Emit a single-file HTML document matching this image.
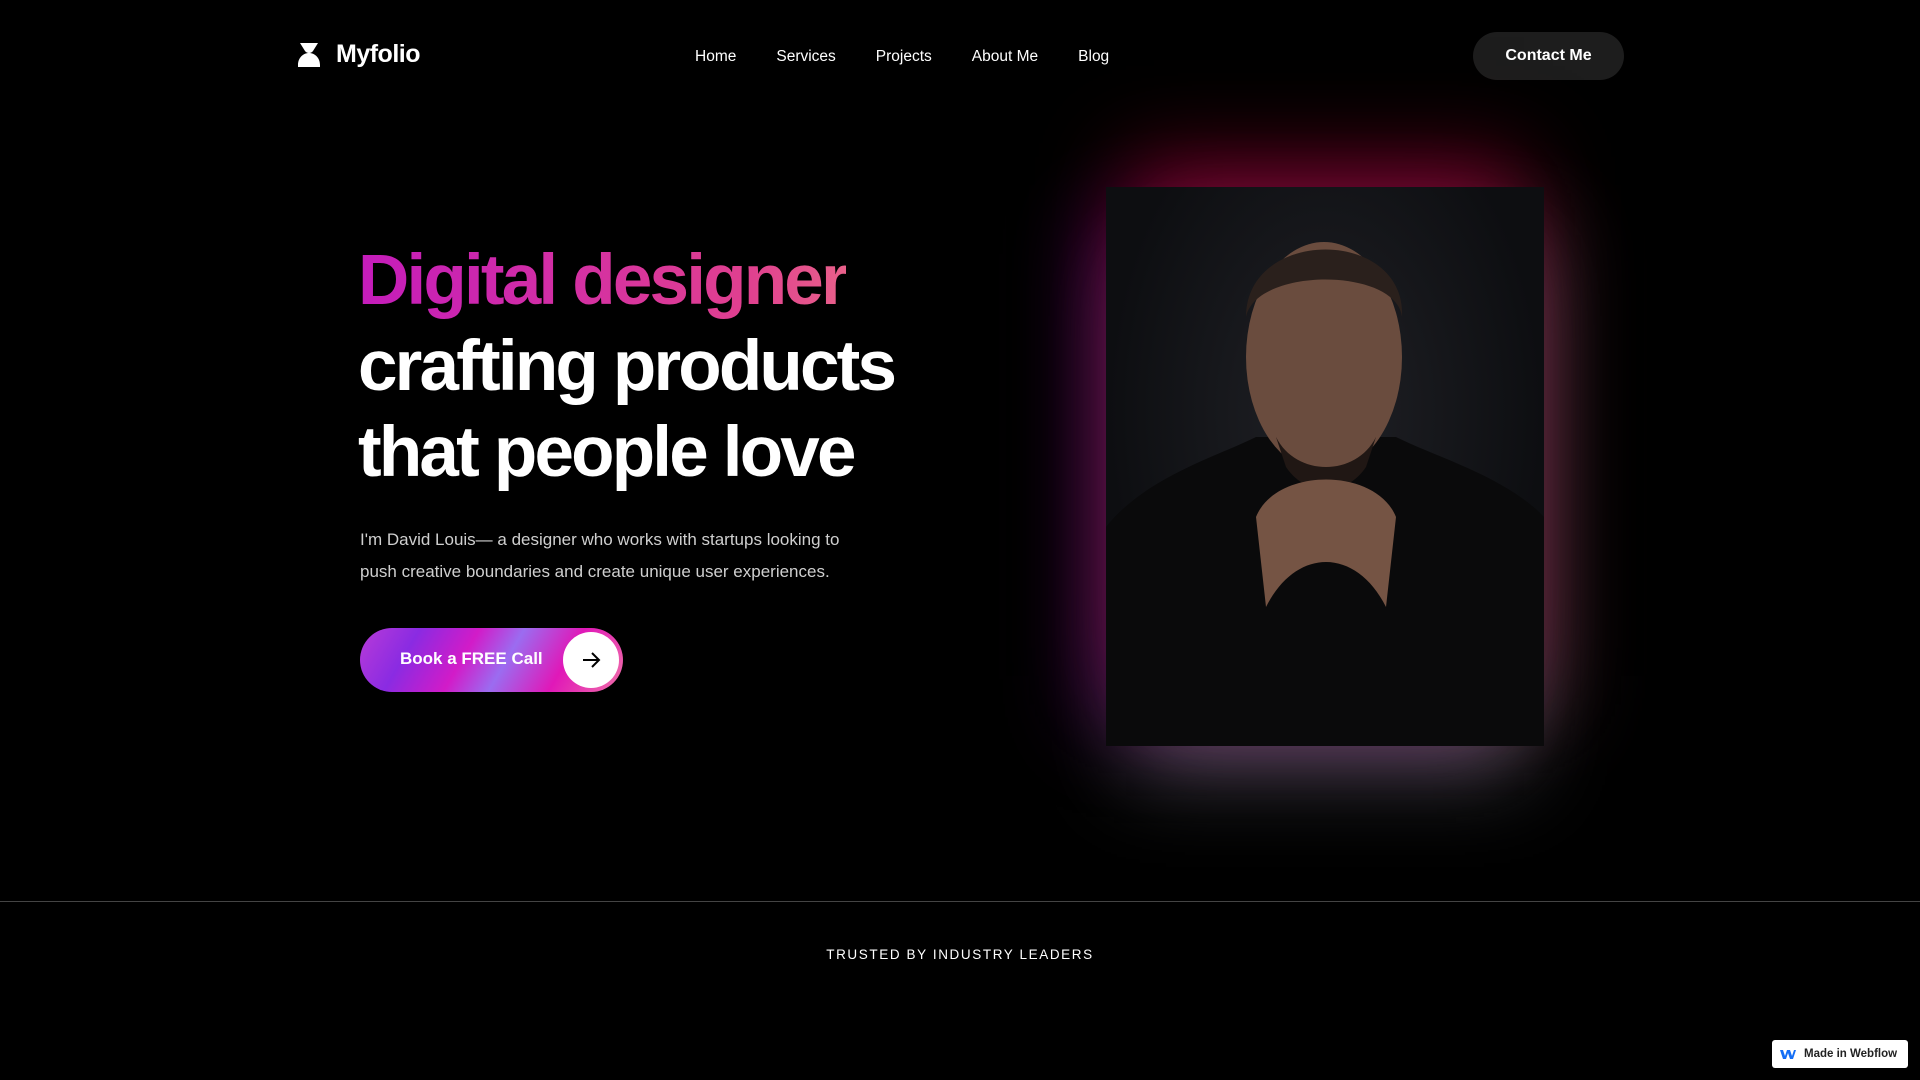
<!DOCTYPE html>
<html><head><meta charset="utf-8"><style>
*{margin:0;padding:0;box-sizing:border-box}
body{width:1920px;height:1080px;background:#000;color:#fff;font-family:"Liberation Sans",sans-serif;overflow:hidden;position:relative}
.logo{position:absolute;left:296px;top:40px;display:flex;align-items:center;gap:14px;font-weight:700;font-size:25px;letter-spacing:-0.5px}
nav{position:absolute;top:48px;left:695px;display:flex;gap:40px;font-size:15.5px}
.contact{position:absolute;left:1473px;top:32px;width:151px;height:48px;border-radius:24px;background:#1d1d1d;font-weight:700;font-size:16px;display:flex;align-items:center;justify-content:center}
h1{position:absolute;left:358px;top:238px;font-size:71px;line-height:86px;font-weight:700;letter-spacing:-2.8px}
h1 .g{background:linear-gradient(90deg,#c41cbb,#e0408f 80%,#e8608a);-webkit-background-clip:text;color:transparent}
p{position:absolute;left:360px;top:524px;font-size:17px;line-height:32px;color:#cfcfcf;width:520px}
.btn{position:absolute;left:360px;top:628px;width:263px;height:64px;border-radius:32px;background:linear-gradient(120deg,#b83bd8 0%,#8a2be2 20%,#d21bc8 40%,#9b6cf0 55%,#e018b8 75%,#f070a8 100%)}
.btn span{position:absolute;left:40px;top:21px;font-size:17px;font-weight:600;color:#fff}
.btn .c{position:absolute;right:4px;top:4px;width:56px;height:56px;border-radius:50%;background:#fff;display:flex;align-items:center;justify-content:center}
.glow{position:absolute;left:1106px;top:187px;width:438px;height:559px;box-shadow:0 -50px 80px -20px rgba(190,0,50,.5),-40px 0 80px -20px rgba(150,0,180,.35),0 50px 80px -20px rgba(220,220,240,.3),40px 0 80px -20px rgba(200,120,150,.25)}
.photo{position:absolute;left:1106px;top:187px;width:438px;height:559px;background:radial-gradient(ellipse at 50% 40%,#202126,#0d0e11 70%);overflow:hidden}
hr{position:absolute;left:0;top:901px;width:1920px;border:0;border-top:1px solid #444}
.trust{position:absolute;top:947px;width:100%;text-align:center;font-size:13.5px;letter-spacing:1.6px}
.wf{position:absolute;left:1772px;top:1040px;width:136px;height:28px;background:#fff;border-radius:3px;color:#222;font-size:11.5px;font-weight:600;display:flex;align-items:center;gap:8px;padding-left:8px}
</style></head><body>
<div class="logo"><svg width="26" height="24" viewBox="0 0 26 24"><path d="M4 0h18l-5 8a5 5 0 0 1-8 0z M13 10c6 0 11 5 11 12v2H2v-2c0-7 5-12 11-12z" fill="#fff"/></svg>Myfolio</div>
<nav><span>Home</span><span>Services</span><span>Projects</span><span>About Me</span><span>Blog</span></nav>
<div class="contact">Contact Me</div>
<h1><span class="g">Digital designer</span><br>crafting products<br>that people love</h1>
<p>I'm David Louis— a designer who works with startups looking to push creative boundaries and create unique user experiences.</p>
<div class="btn"><span>Book a FREE Call</span><div class="c"><svg width="24" height="24" viewBox="0 0 24 24" fill="none" stroke="#000" stroke-width="2"><path d="M4 12h15M13 5l7 7-7 7"/></svg></div></div>
<div class="glow"></div>
<div class="photo"><svg width="438" height="559" viewBox="0 0 438 559">
<path d="M0 340 C40 290 110 270 150 250 L290 250 C330 270 400 290 438 330 L438 559 L0 559Z" fill="#0a0a0b"/>
<ellipse cx="218" cy="170" rx="78" ry="115" fill="#6a4c3e"/>
<path d="M140 130 C140 40 300 40 296 130 C290 80 150 80 140 130Z" fill="#2a201c"/>
<path d="M170 250 C190 290 250 290 270 250 L260 280 C240 310 200 310 180 280Z" fill="#201714"/>
<path d="M150 330 C170 280 270 280 290 330 L280 420 C250 360 190 360 160 420Z" fill="#755444"/>
</svg></div>
<hr>
<div class="trust">TRUSTED BY INDUSTRY LEADERS</div>
<div class="wf"><svg width="16" height="10" viewBox="0 0 16 10"><path d="M0 1h3l2 6 2-6h3l2 6 2-6h2l-3 9h-3l-2-6-2 6H3z" fill="#146ef5"/></svg>Made in Webflow</div>
</body></html>
